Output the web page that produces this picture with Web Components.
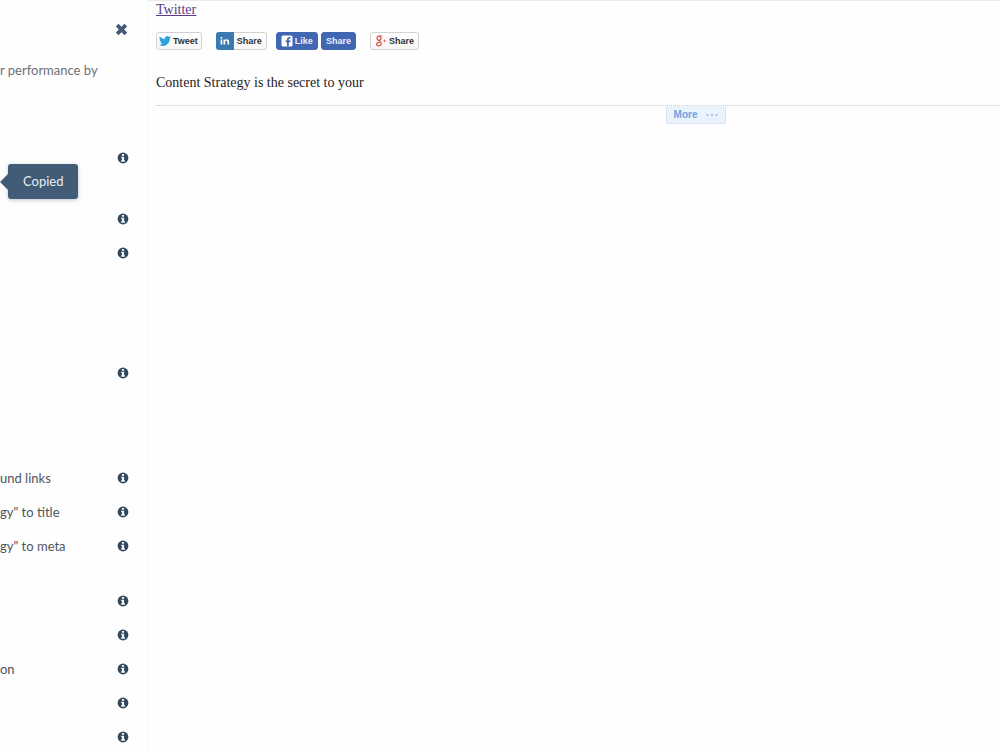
<!DOCTYPE html>
<html lang="en">
<head>
<meta charset="utf-8">
<title>Content Strategy</title>
<style>
    :root {
        --bg-color: #fefefe;
        --ink-color: #33475b;
        --tooltip-color: #425b76;
        --text-color: #4d545c;
    }
    body {
        margin: 0;
        background: var(--bg-color);
    }
</style>
</head>
<body>
<editor-app></editor-app>
<script>
class InfoButton extends HTMLElement {
    constructor() {
        super();
        this.attachShadow({ mode: 'open' });
        this.shadowRoot.innerHTML = `
            <style>
                :host { display: block; flex: none; }
                button {
                    display: block;
                    padding: 0;
                    border: none;
                    background: none;
                    color: var(--ink-color);
                    cursor: pointer;
                }
                svg { display: block; width: 12px; height: 12px; }
            </style>
            <button type="button" aria-label="More information">
                <svg viewBox="0 0 12 12">
                    <circle cx="6" cy="6" r="5.4" fill="currentColor"/>
                    <path d="M4.9 2.1h2.2v1.700H4.900zM4.200 4.700h2.900v3.600h.8v1.400H4.200V8.300H4.900V6.100h-.7z" fill="#f4f6f8"/>
                </svg>
            </button>
        `;
    }
}
customElements.define('info-button', InfoButton);

class CheckRow extends HTMLElement {
    constructor() {
        super();
        this.attachShadow({ mode: 'open' });
        this.shadowRoot.innerHTML = `
            <style>
                :host {
                    display: flex;
                    align-items: center;
                    justify-content: space-between;
                    height: 34px;
                    flex: none;
                    position: relative;
                    padding-right: 19px;
                    font-size: 13px;
                    line-height: 20px;
                    white-space: nowrap;
                }
            </style>
            <span><slot></slot></span>
            <slot name="tip"></slot>
            <info-button></info-button>
        `;
    }
}
customElements.define('check-row', CheckRow);

class CopyTooltip extends HTMLElement {
    constructor() {
        super();
        this.attachShadow({ mode: 'open' });
        this.shadowRoot.innerHTML = `
            <style>
                :host {
                    display: block;
                    position: absolute;
                    left: 8px;
                    top: 23px;
                    padding: 8px 15px;
                    border-radius: 3px;
                    background: var(--tooltip-color);
                    box-shadow: 0 1px 4px rgba(45, 62, 80, 0.3);
                    color: #e6edf3;
                    font-size: 13px;
                    line-height: 19px;
                }
                :host::before {
                    content: '';
                    position: absolute;
                    left: -8px;
                    top: 10px;
                    border: 8px solid transparent;
                    border-left: none;
                    border-right-color: var(--tooltip-color);
                }
            </style>
            <slot></slot>
        `;
    }
}
customElements.define('copy-tooltip', CopyTooltip);

class SeoPanel extends HTMLElement {
    constructor() {
        super();
        this.attachShadow({ mode: 'open' });
        this.shadowRoot.innerHTML = `
            <style>
                :host {
                    display: flex;
                    flex-direction: column;
                    border-right: 1px solid #f6f6f7;
                    color: var(--text-color);
                    font-family: Lato, sans-serif;
                    font-size: 13px;
                }
                header {
                    display: flex;
                    justify-content: flex-end;
                    padding: 23px 20px 0 0;
                }
                header button {
                    padding: 0;
                    border: none;
                    background: none;
                    color: var(--tooltip-color);
                    cursor: pointer;
                }
                header svg { display: block; width: 13px; height: 13px; }
                p {
                    margin: 24px 0 61px;
                    line-height: 20px;
                    color: #6b7078;
                    white-space: nowrap;
                }
                section { flex: none; }
                .terms { margin-top: 27px; }
                .copy { margin-top: 86px; }
                .links { margin-top: 71px; }
                .more { margin-top: 21px; }
            </style>
            <header>
                <button type="button" aria-label="Close">
                    <svg viewBox="0 0 12 12"><path d="M2 2l8 8M10 2l-8 8" stroke="currentColor" stroke-width="3.4" fill="none"/></svg>
                </button>
            </header>
            <p>r performance by</p>
            <section>
                <check-row><copy-tooltip slot="tip" role="tooltip">Copied</copy-tooltip></check-row>
            </section>
            <section class="terms">
                <check-row></check-row>
                <check-row></check-row>
            </section>
            <section class="copy">
                <check-row></check-row>
            </section>
            <section class="links">
                <check-row>und links</check-row>
                <check-row>gy" to title</check-row>
                <check-row>gy" to meta</check-row>
            </section>
            <section class="more">
                <check-row></check-row>
                <check-row></check-row>
                <check-row>on</check-row>
                <check-row></check-row>
                <check-row></check-row>
            </section>
        `;
    }
}
customElements.define('seo-panel', SeoPanel);

const shareIcons = {
    twitter: `<svg viewBox="0 0 24 24" width="12" height="12"><path fill="#2aa3dc" d="M24 4.6a10 10 0 0 1-2.8.8 5 5 0 0 0 2.1-2.7 10 10 0 0 1-3.1 1.2 4.9 4.9 0 0 0-8.4 4.5A14 14 0 0 1 1.7 3.2a4.9 4.9 0 0 0 1.5 6.6 5 5 0 0 1-2.2-.6 4.9 4.9 0 0 0 3.9 4.8 5 5 0 0 1-2.2.1 4.9 4.9 0 0 0 4.6 3.4A10 10 0 0 1 0 19.5a14 14 0 0 0 21.5-12.4A10 10 0 0 0 24 4.6z"/></svg>`,
    linkedin: `<svg viewBox="0 0 10 10" width="10" height="10"><path fill="#fff" d="M.6 3.500h1.700V8.500H.6zM.6 1h1.700v1.500H.6zM3.500 3.500h1.600v.7c.4-.6.900-.9 1.800-.9 1.500 0 2.200.9 2.200 2.400v2.800H7.400V6c0-.8-.3-1.300-1-1.300-.8 0-1.200.5-1.200 1.400v2.400H3.500z"/></svg>`,
    facebook: `<svg viewBox="0 0 12 12" width="12" height="12"><rect x=".5" y=".5" width="11" height="11" rx="1.500" fill="#fff"/><path fill="#4267b2" d="M6 11.500V7.300H4.600V5.600H6V4.400C6 2.900 6.900 2 8.300 2h1.300v1.600h-.9c-.7 0-.9.300-.9.900v1.100h1.800l-.3 1.700H7.800v4.200z"/></svg>`,
    google: `<svg viewBox="0 0 12 12" width="12" height="12" fill="none" stroke="#dc5a4a"><ellipse cx="4" cy="3.200" rx="2" ry="2.100" stroke-width="1.300"/><path d="M4 1h3.200M5.300 5c-1.500.6-.8 1.300.2 2 1.500 1.100 1 3.800-1.800 3.800C.7 10.800.6 7.500 4.800 7.200" stroke-width="1.200"/><path d="M9.500 4.500v2.600M8.200 5.800h2.600" stroke-width=".8"/></svg>`
};

class ShareButton extends HTMLElement {
    constructor() {
        super();
        this.attachShadow({ mode: 'open' });
        const icon = shareIcons[this.getAttribute('icon')] || '';
        this.shadowRoot.innerHTML = `
            <style>
                :host { display: block; }
                button {
                    display: flex;
                    align-items: center;
                    gap: 2px;
                    height: 18px;
                    padding: 0 3px 0 2px;
                    border: 1px solid #d2d2d4;
                    border-radius: 3px;
                    background: linear-gradient(#fff, #f6f6f6);
                    color: #333;
                    font: bold 9px/16px "Liberation Sans", Arial, sans-serif;
                    cursor: pointer;
                }
                span { display: flex; align-items: center; }
                svg { display: block; }
                :host([icon="linkedin"]) button { padding: 0 4px 0 0; gap: 3px; }
                :host([icon="linkedin"]) span {
                    height: 18px;
                    margin: -1px 0 -1px -1px;
                    padding: 0 4px;
                    border-radius: 3px 0 0 3px;
                    background: #3b7ab0;
                }
                :host([icon="google"]) button { padding: 0 4px; gap: 2px; }
                :host([blue]) button {
                    gap: 2px;
                    padding: 0 4px;
                    border-color: #4267b2;
                    background: #4267b2;
                    color: #e8eefa;
                }
                .empty { display: none; }
            </style>
            <button type="button"><span class="${icon ? 'icon' : 'empty'}">${icon}</span><slot></slot></button>
        `;
    }
}
customElements.define('share-button', ShareButton);

class PagePreview extends HTMLElement {
    constructor() {
        super();
        this.attachShadow({ mode: 'open' });
        this.shadowRoot.innerHTML = `
            <style>
                :host {
                    display: block;
                    padding-left: 7px;
                    border-top: 1px solid #e9e9eb;
                    overflow: hidden;
                    font: 14px/18px "Liberation Serif", "Times New Roman", serif;
                    color: #222;
                }
                a { color: #5d3b8c; }
                .share { display: flex; margin-top: 13px; }
                .facebook { display: flex; gap: 3px; margin: 0 14px 0 9px; }
                .tweet { margin-right: 14px; }
                p { margin: 24px 0 13px; }
                /* the previewed page is wider than the window */
                .divider {
                    display: flex;
                    justify-content: center;
                    margin-right: -236px;
                    border-top: 1px dotted #c6ccd2;
                }
                .divider button {
                    display: flex;
                    align-items: center;
                    gap: 9px;
                    height: 18px;
                    padding: 0 7px;
                    border: 1px solid #dbe6f5;
                    border-top: none;
                    border-radius: 0 0 2px 2px;
                    background: #eaf2fc;
                    color: #6fa0e0;
                    font: bold 10px/16px "Liberation Sans", Arial, sans-serif;
                    cursor: pointer;
                }
            </style>
            <a href="#">Twitter</a>
            <div class="share">
                <share-button icon="twitter" class="tweet">Tweet</share-button>
                <share-button icon="linkedin">Share</share-button>
                <div class="facebook">
                    <share-button icon="facebook" blue>Like</share-button>
                    <share-button blue>Share</share-button>
                </div>
                <share-button icon="google">Share</share-button>
            </div>
            <p>Content Strategy is the secret to your</p>
            <div class="divider">
                <button type="button">More
                    <svg width="12" height="4" viewBox="0 0 12 4" fill="#a3c0e8"><circle cx="1.5" cy="2" r="1.1"/><circle cx="6" cy="2" r="1.1"/><circle cx="10.5" cy="2" r="1.1"/></svg>
                </button>
            </div>
        `;
    }
}
customElements.define('page-preview', PagePreview);

class EditorApp extends HTMLElement {
    constructor() {
        super();
        this.attachShadow({ mode: 'open' });
        this.shadowRoot.innerHTML = `
            <style>
                :host {
                    display: grid;
                    grid-template-columns: 149px minmax(0, 1fr);
                    height: 100vh;
                    overflow: hidden;
                }
            </style>
            <seo-panel></seo-panel>
            <page-preview></page-preview>
        `;
    }
}
customElements.define('editor-app', EditorApp);
</script>
</body>
</html>
